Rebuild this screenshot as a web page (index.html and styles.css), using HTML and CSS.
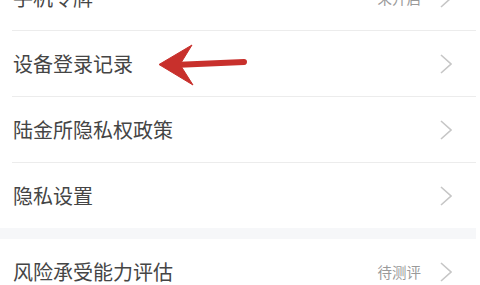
FILE: index.html
```html
<!DOCTYPE html>
<html lang="zh-CN">
<head>
    <meta charset="UTF-8">
    <meta name="viewport" content="width=device-width, initial-scale=1.0">
    <title>安全设置</title>
    <link rel="stylesheet" href="styles.css">
</head>
<body>
    <div class="page">
        <div class="group first">
            <div class="row">
                <span class="label">手机令牌</span>
                <span class="value">未开启</span>
                <svg class="chevron" width="12" height="20" viewBox="0 0 12 20"><polyline points="1,1 11,10 1,19"/></svg>
            </div>
            <div class="row">
                <span class="label">设备登录记录</span>
                <svg class="chevron" width="12" height="20" viewBox="0 0 12 20"><polyline points="1,1 11,10 1,19"/></svg>
            </div>
            <div class="row">
                <span class="label">陆金所隐私权政策</span>
                <svg class="chevron" width="12" height="20" viewBox="0 0 12 20"><polyline points="1,1 11,10 1,19"/></svg>
            </div>
            <div class="row last">
                <span class="label">隐私设置</span>
                <svg class="chevron" width="12" height="20" viewBox="0 0 12 20"><polyline points="1,1 11,10 1,19"/></svg>
            </div>
        </div>
        <div class="group">
            <div class="row last">
                <span class="label">风险承受能力评估</span>
                <span class="value">待测评</span>
                <svg class="chevron" width="12" height="20" viewBox="0 0 12 20"><polyline points="1,1 11,10 1,19"/></svg>
            </div>
        </div>

        <!-- red arrow annotation -->
        <svg class="arrow" width="92" height="42" viewBox="0 0 92 42">
            <path d="M 16 21 L 86 18" stroke="#c8302c" stroke-width="6" stroke-linecap="round" fill="none"/>
            <path d="M 1 20.5 L 34 1 L 22 20.5 L 35 41 Z" fill="#c8302c" stroke="#c8302c" stroke-width="1" stroke-linejoin="round"/>
        </svg>
    </div>
</body>
</html>
```

FILE: styles.css
```css
body {
    margin: 0;
    background-color: #ffffff;
    font-family: "Noto Sans CJK SC", "Noto Sans", sans-serif;
    overflow: hidden;
}

.page {
    position: relative;
    display: flow-root;
    width: 476px;
}

.group {
    background-color: #fff;
    padding-left: 12px;
}

.group.first {
    margin-top: -35px;
    border-bottom: 11px solid #f6f7f9;
}

.row {
    display: flex;
    align-items: center;
    height: 65px;
    border-bottom: 1px solid #ececec;
    padding-right: 24px;
}

.row.last {
    border-bottom: none;
}

.label {
    flex: 1;
    font-size: 20px;
    color: #454545;
    padding-left: 1px;
}

.value {
    font-size: 14.5px;
    color: #9a9a9a;
    margin-right: 19px;
}

.chevron {
    fill: none;
    stroke: #c6c6c6;
    stroke-width: 1.6;
}

.arrow {
    position: absolute;
    left: 158px;
    top: 44px;
}
```
